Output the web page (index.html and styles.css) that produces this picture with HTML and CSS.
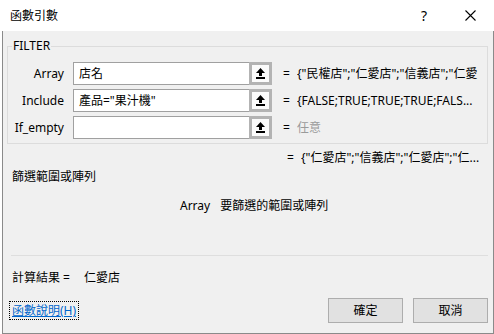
FILE: index.html
```html
<!DOCTYPE html>
<html lang="zh-Hant">
<head>
<meta charset="utf-8">
<title>函數引數</title>
<link rel="stylesheet" href="styles.css">
</head>
<body>
<div class="window">
  <div class="titlebar">
    <div class="title">函數引數</div>
    <div class="tbtn help">?</div>
    <div class="tbtn close">
      <svg width="11" height="11" viewBox="0 0 11 11"><path d="M0.5 0.5 L10.5 10.5 M10.5 0.5 L0.5 10.5" stroke="#000" stroke-width="1.1" fill="none"/></svg>
    </div>
  </div>
  <div class="content">
    <fieldset class="group">
      <legend>FILTER</legend>
      <div class="args">
        <div class="label">Array</div>
        <div class="field"><span class="input">店名</span><span class="refbtn"><svg width="9" height="11" viewBox="0 0 9 11"><polygon points="4.5,0 9,5 0,5" fill="#000"/><rect x="3" y="5" width="3" height="3" fill="#000"/><rect x="0" y="9" width="9" height="2" fill="#000"/></svg></span></div>
        <div class="eq">=</div>
        <div class="val">{"民權店";"仁愛店";"信義店";"仁愛</div>

        <div class="label">Include</div>
        <div class="field"><span class="input">產品="果汁機"</span><span class="refbtn"><svg width="9" height="11" viewBox="0 0 9 11"><polygon points="4.5,0 9,5 0,5" fill="#000"/><rect x="3" y="5" width="3" height="3" fill="#000"/><rect x="0" y="9" width="9" height="2" fill="#000"/></svg></span></div>
        <div class="eq">=</div>
        <div class="val">{FALSE;TRUE;TRUE;TRUE;FALS...</div>

        <div class="label">If_empty</div>
        <div class="field"><span class="input"></span><span class="refbtn"><svg width="9" height="11" viewBox="0 0 9 11"><polygon points="4.5,0 9,5 0,5" fill="#000"/><rect x="3" y="5" width="3" height="3" fill="#000"/><rect x="0" y="9" width="9" height="2" fill="#000"/></svg></span></div>
        <div class="eq">=</div>
        <div class="val muted">任意</div>
      </div>
    </fieldset>

    <div class="result">
      <div class="eq">=</div>
      <div class="val">{"仁愛店";"信義店";"仁愛店";"仁...</div>
    </div>

    <div class="desc">篩選範圍或陣列</div>
    <div class="argdesc"><span class="argname">Array</span><span>要篩選的範圍或陣列</span></div>

    <div class="sep"></div>

    <div class="calc"><span>計算結果 =</span><span class="calcval">仁愛店</span></div>

    <div class="footer">
      <a class="helplink" href="#">函數說明(H)</a>
      <div class="buttons">
        <div class="btn">確定</div>
        <div class="btn">取消</div>
      </div>
    </div>
  </div>
</div>
</body>
</html>
```
FILE: styles.css
```css
* { box-sizing: border-box; }
html, body {
  margin: 0;
  padding: 0;
  background: #ffffff;
}
body {
  font-family: "Noto Sans", "Noto Sans CJK TC", sans-serif;
  font-size: 12px;
  line-height: 16px;
  color: #000;
}
.window {
  width: 494px;
  height: 334px;
  display: flex;
  flex-direction: column;
}
.titlebar {
  height: 31px;
  background: #ffffff;
  display: flex;
  align-items: center;
  padding-right: 1px;
}
.title {
  flex: 1;
  padding-left: 10px;
  font-size: 12px;
}
.tbtn {
  width: 46px;
  height: 31px;
  display: flex;
  align-items: center;
  justify-content: center;
}
.help {
  font-size: 14px;
  padding-top: 1px;
}
.close svg { display: block; margin-left: 1px; }

.content {
  flex: 1;
  margin-left: 2px;
  background: #f0f0f0;
  border-left: 1px solid #8a8a8a;
  border-right: 1px solid #8a8a8a;
  border-bottom: 1px solid #8a8a8a;
  padding: 7px 5px 0 4px;
  display: flex;
  flex-direction: column;
}
.group {
  margin: 0;
  padding: 8px 0 4px 0;
  border: 1px solid #dcdcdc;
  min-width: 0;
}
.group legend {
  margin-left: 4px;
  padding: 0 1px;
  line-height: 16px;
}
.args {
  display: grid;
  grid-template-columns: 56px 208px 25px minmax(0, 1fr);
  row-gap: 4px;
  align-items: center;
}
.label {
  text-align: right;
}
.field {
  margin-left: 9px;
  display: flex;
  height: 23px;
  width: 199px;
}
.input {
  width: 176px;
  height: 23px;
  background: #ffffff;
  border: 1px solid #a0a0a0;
  border-right: none;
  padding: 3px 5px;
  white-space: nowrap;
  overflow: hidden;
}
.refbtn {
  width: 23px;
  height: 23px;
  border: 3px solid #b3b3b3;
  background: #fbfbfb;
  display: flex;
  align-items: center;
  justify-content: center;
}
.refbtn svg { display: block; margin-left: -1px; }
.eq {
  padding-left: 11px;
  width: 25px;
  flex-shrink: 0;
}
.val {
  white-space: nowrap;
  overflow: hidden;
  padding-right: 2px;
  min-width: 0;
}
.muted { color: #9a9a9a; }

.result {
  display: flex;
  margin-top: 6px;
  padding-left: 269px;
}
.result .val { flex: 1; }

.desc {
  margin-top: 3px;
  padding-left: 5px;
}
.argdesc {
  margin-top: 13px;
  padding-left: 173px;
  display: flex;
  gap: 10px;
}
.sep {
  margin-top: 41px;
  height: 1px;
  background: #dedede;
  margin-left: 4px;
}
.calc {
  margin-top: 14px;
  padding-left: 5px;
  display: flex;
}
.calcval { margin-left: 14px; }

.footer {
  margin-top: 12px;
  display: flex;
  align-items: center;
  justify-content: space-between;
}
.helplink {
  margin-left: 2px;
  color: #0066cc;
  text-decoration: underline;
  border: 1px dotted #000;
  padding: 0 2px;
  line-height: 17px;
}
.buttons {
  display: flex;
  gap: 10px;
}
.btn {
  width: 75px;
  height: 25px;
  background: #e1e1e1;
  border: 1px solid #adadad;
  display: flex;
  align-items: center;
  justify-content: center;
}
```
